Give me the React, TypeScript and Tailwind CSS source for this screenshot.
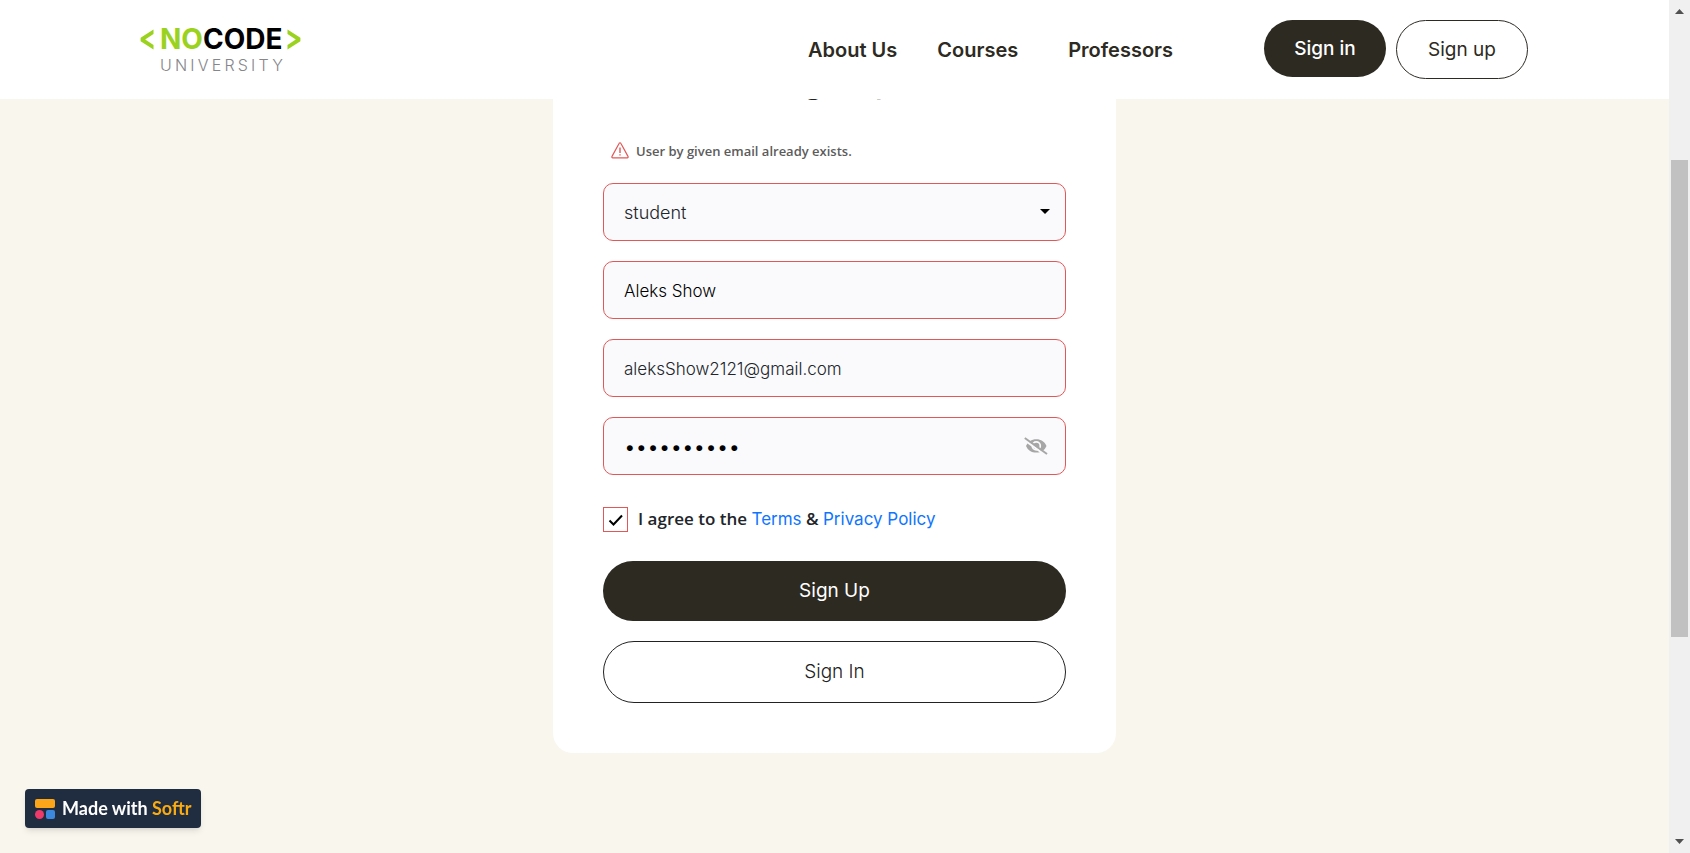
import React, { useState } from 'react';

const field =
  'block h-[58px] w-full rounded-[10px] border border-[#e25858] bg-[#fafafd] px-5 font-light outline-none';

function Logo() {
  return (
    <a href="#home" aria-label="Nocode University" className="flex items-start gap-[6px]">
      <svg width="14" height="21" viewBox="0 0 14 21" className="mt-[2px]" aria-hidden="true">
        <path d="M13.5 0.5v4.6L5.2 10.5l8.3 5.4v4.6L0.6 12.3V8.7z" fill="#9ad21e" />
      </svg>
      <span className="flex w-[121px] flex-col">
        <span className="text-[28px] leading-[24px] font-bold text-black">
          <span className="text-[#9ad21e]">NO</span>CODE
        </span>
        <span className="mt-[5px] text-[16px] leading-[18px] font-light tracking-[0.2em] text-[#85858a]">UNIVERSITY</span>
      </span>
      <svg width="14" height="21" viewBox="0 0 14 21" className="mt-[2px]" aria-hidden="true">
        <path d="M0.5 0.5v4.6l8.3 5.4-8.3 5.4v4.6l12.9-8.2V8.7z" fill="#9ad21e" />
      </svg>
    </a>
  );
}

function Header() {
  return (
    <header className="flex h-[99px] items-start bg-white px-[140px] pt-5">
      <div className="mt-[7px] flex-1">
        <Logo />
      </div>
      <nav className="flex h-[60px] items-center text-[20px] font-semibold text-[#2d2a22]">
        <a href="#about">About Us</a>
        <a href="#courses" className="ml-10">Courses</a>
        <a href="#professors" className="ml-[50px]">Professors</a>
      </nav>
      <div className="mr-px ml-[91px] flex gap-[10px] text-[19px]">
        <button type="button" className="h-[57px] w-[122px] rounded-full bg-[#2d2a22] pt-[2px] font-medium text-white">
          Sign in
        </button>
        <button type="button" className="h-[59px] w-[132px] rounded-full border border-[#2d2a22] bg-white pt-[2px] text-[#2d2a22]">
          Sign up
        </button>
      </div>
    </header>
  );
}

function HiddenEye() {
  return (
    <svg width="24" height="18" viewBox="0 0 24 18" fill="none" aria-hidden="true">
      <path d="M2 9C4 4.500 7.500 2.200 12.300 2.200S20.500 4.500 22.500 9c-2 4.500-5.400 6.600-10.200 6.600S4 13.500 2 9z" fill="#a6a6a6" />
      <circle cx="12.300" cy="8.900" r="4" stroke="#fafafd" strokeWidth="1.700" />
      <path d="M0 2.600l22 16" stroke="#fafafd" strokeWidth="2.200" />
      <path d="M0.800 1l22.200 16" stroke="#a6a6a6" strokeWidth="2" />
    </svg>
  );
}

function SignUpForm() {
  const [visible, setVisible] = useState(false);
  return (
    <form
      className="-mt-[80px] flex w-[563px] flex-col rounded-[20px] bg-white px-[50px] pt-[41px] pb-[50px]"
      onSubmit={(event) => event.preventDefault()}
    >
      <h1 className="text-center text-[32px] leading-[44px] font-medium text-[#222]">Sign Up</h1>
      <p role="alert" className="mt-[38px] flex h-5 items-center gap-[7px] pl-2 font-['Open_Sans',sans-serif] text-[13px] font-semibold text-[#5c5c5c]">
        <svg width="18" height="17" viewBox="0 0 18 17" fill="none" stroke="#e25858" aria-hidden="true" className="mb-1">
          <path d="M8.2 1.3a.9.9 0 0 1 1.6 0l7.2 13.1a.9.9 0 0 1-.8 1.4H1.8a.9.9 0 0 1-.8-1.4z" strokeWidth="1.2" />
          <path d="M9 5.5v5.5M9 12.2v1.4" strokeWidth="1.4" />
        </svg>
        User by given email already exists.
      </p>
      <div className="mt-[21px] flex flex-col gap-5">
        <div className="relative">
          <select aria-label="Role" defaultValue="student" className={`${field} appearance-none text-[18px] text-[#212529]`}>
            <option value="student">student</option>
            <option value="professor">professor</option>
          </select>
          <svg width="10" height="5" viewBox="0 0 10 5" className="pointer-events-none absolute top-[26px] right-4" aria-hidden="true">
            <path d="M0 0h10L5 5z" fill="#000" />
          </svg>
        </div>
        <input aria-label="Full name" type="text" defaultValue="Aleks Show" className={`${field} pt-[2px] text-[17px] text-black`} />
        <input aria-label="Email" type="email" defaultValue="aleksShow2121@gmail.com" className={`${field} pt-[2px] text-[17px] text-[#212529]`} />
        <div className="relative">
          <input
            aria-label="Password"
            type={visible ? 'text' : 'password'}
            defaultValue="nocode2121"
            className={`${field} font-[Lato,sans-serif] text-[20px] text-black`}
          />
          <button type="button" aria-label="Show password" onClick={() => setVisible(!visible)} className="absolute top-5 right-[18px]">
            <HiddenEye />
          </button>
        </div>
      </div>
      <div className="mt-[31px] flex items-center gap-[10px] font-['Open_Sans',sans-serif] text-[17px] leading-[25px] font-semibold text-[#212529]">
        <span className="relative flex h-[25px] w-[25px]">
          <input id="agree" type="checkbox" defaultChecked className="peer h-[25px] w-[25px] appearance-none border border-[#e25858] bg-white" />
          <svg width="25" height="25" viewBox="0 0 25 25" className="pointer-events-none absolute inset-0 hidden peer-checked:block" fill="none" stroke="#000" strokeWidth="2" aria-hidden="true">
            <path d="M6.500 13.500l4 4 8.500-9" />
          </svg>
        </span>
        <span>
          <label htmlFor="agree">I agree to the</label>{' '}
          <a href="#terms" className="font-[Inter,sans-serif] font-normal text-[#0f75ff]">Terms</a> &amp;{' '}
          <a href="#privacy" className="font-[Inter,sans-serif] font-normal text-[#0f75ff]">Privacy Policy</a>
        </span>
      </div>
      <button type="submit" className="mt-[29px] h-[60px] rounded-full bg-[#2d2a22] text-[19px] text-white">Sign Up</button>
      <button type="button" className="mt-5 h-[62px] rounded-full border border-[#222] bg-white text-[19px] font-light text-[#222]">Sign In</button>
    </form>
  );
}

function ScrollTrack() {
  return (
    <div className="flex w-[21px] shrink-0 flex-col items-center bg-[#f0f0f0]" aria-hidden="true">
      <svg width="9" height="5" viewBox="0 0 9 5" className="mt-[9px]"><path d="M0 5h9L4.500 0z" fill="#505050" /></svg>
      <div className="mt-[146px] h-[477px] w-[17px] bg-[#c1c1c1]" />
      <svg width="9" height="5" viewBox="0 0 9 5" className="mt-auto mb-[9px]"><path d="M0 0h9L4.500 5z" fill="#505050" /></svg>
    </div>
  );
}

export default function App() {
  return (
    <div className="flex min-h-screen bg-[#f9f6ee] font-[Inter,sans-serif]">
      <div className="flex min-w-0 flex-1 flex-col">
        <Header />
        <main className="flex flex-1 items-start justify-center overflow-hidden">
          <SignUpForm />
        </main>
      </div>
      <ScrollTrack />
      <a
        href="#softr"
        className="fixed bottom-[25px] left-[25px] flex h-[39px] w-[176px] items-center gap-[7px] rounded bg-[#202c40] pl-[10px] font-[Lato,sans-serif] text-[18px] font-bold whitespace-nowrap text-white shadow-md"
      >
        <svg width="20" height="20" viewBox="0 0 20 20" aria-hidden="true">
          <rect width="20" height="9" rx="2" fill="#faa51a" />
          <circle cx="4.500" cy="15.500" r="4.500" fill="#ee3a6a" />
          <rect x="11" y="11" width="9" height="9" rx="2" fill="#3d88df" />
        </svg>
        <span>
          Made with <span className="text-[#f9ab10]">Softr</span>
        </span>
      </a>
    </div>
  );
}
